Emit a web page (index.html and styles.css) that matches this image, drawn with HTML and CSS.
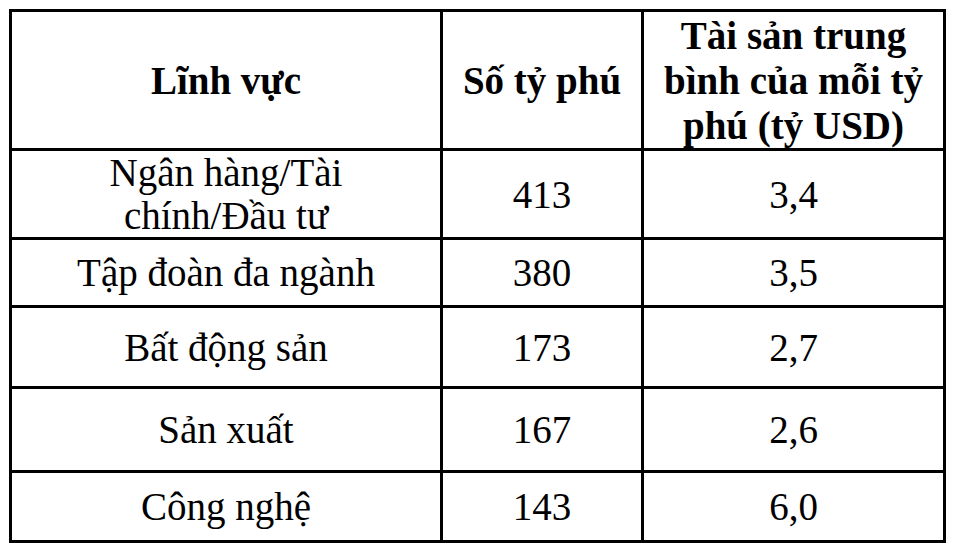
FILE: index.html
```html
<!DOCTYPE html>
<html lang="vi">
<head>
<meta charset="utf-8">
<title>Tỷ phú theo lĩnh vực</title>
<link rel="stylesheet" href="styles.css">
</head>
<body>
<table class="stats">
  <colgroup>
    <col class="c1">
    <col class="c2">
    <col class="c3">
  </colgroup>
  <thead>
    <tr class="r-head">
      <th>Lĩnh vực</th>
      <th>Số tỷ phú</th>
      <th>Tài sản trung<br>bình của mỗi tỷ<br>phú (tỷ USD)</th>
    </tr>
  </thead>
  <tbody>
    <tr class="r1">
      <td>Ngân hàng/Tài<br>chính/Đầu tư</td>
      <td>413</td>
      <td>3,4</td>
    </tr>
    <tr class="r2">
      <td>Tập đoàn đa ngành</td>
      <td>380</td>
      <td>3,5</td>
    </tr>
    <tr class="r3">
      <td>Bất động sản</td>
      <td>173</td>
      <td>2,7</td>
    </tr>
    <tr class="r4">
      <td>Sản xuất</td>
      <td>167</td>
      <td>2,6</td>
    </tr>
    <tr class="r5">
      <td>Công nghệ</td>
      <td>143</td>
      <td>6,0</td>
    </tr>
  </tbody>
</table>
</body>
</html>
```
FILE: styles.css
```css
html, body {
  background: #ffffff;
}
body {
  margin: 9px;
}
.stats {
  border-collapse: collapse;
  table-layout: fixed;
  width: 937px;
  font-family: "Liberation Serif", "Times New Roman", serif;
  color: #000;
}
.c1 { width: 431px; }
.c2 { width: 201px; }
.c3 { width: 302px; }
.stats th,
.stats td {
  border: 3px solid #000;
  padding: 0;
  text-align: center;
  vertical-align: middle;
  font-size: 39px;
}
.stats th {
  font-weight: bold;
  line-height: 45px;
}
.stats td {
  font-weight: normal;
  line-height: 43px;
}
.r-head { height: 139px; }
.r1 { height: 89px; }
.r2 { height: 68px; }
.r3 { height: 81px; }
.r4 { height: 84px; }
.r5 { height: 70px; }
```
